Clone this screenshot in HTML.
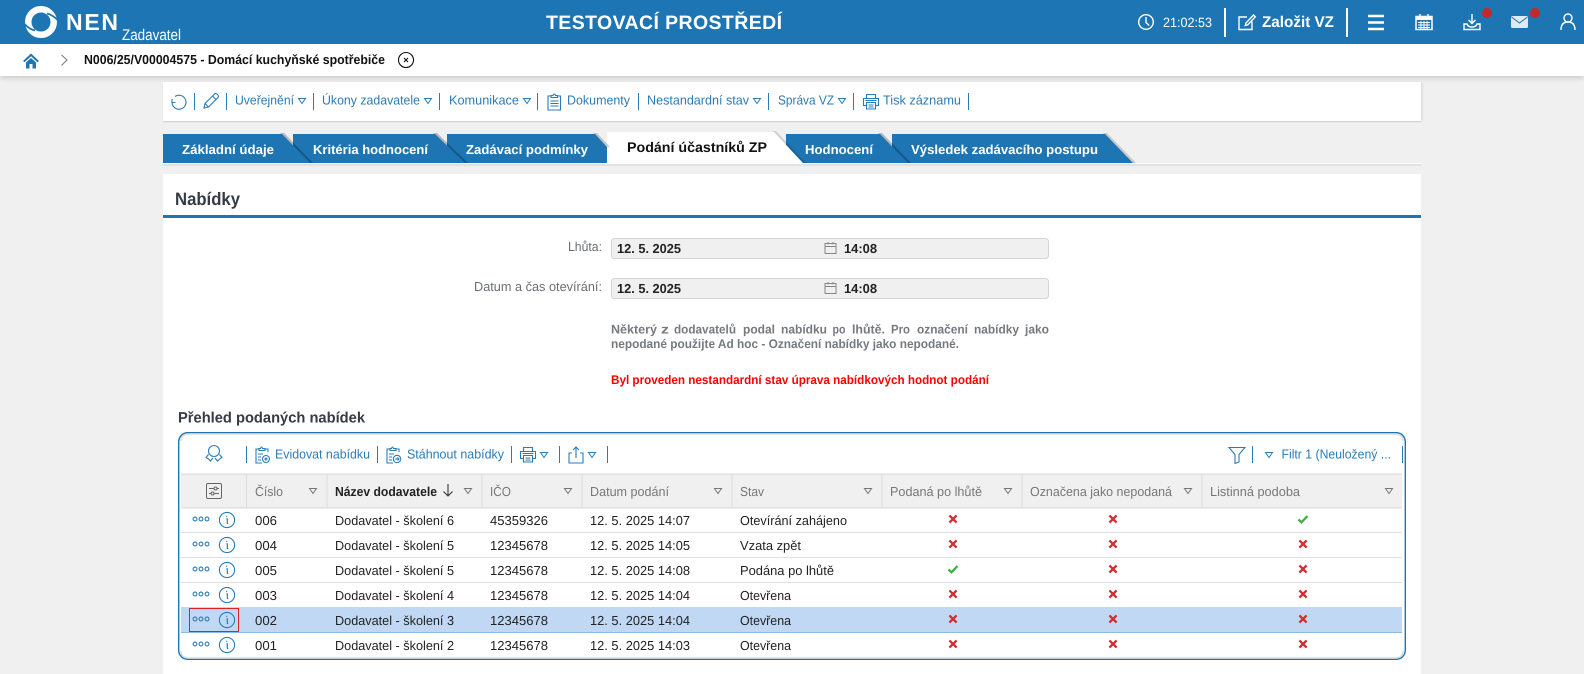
<!DOCTYPE html>
<html lang="cs"><head><meta charset="utf-8"><title>NEN</title>
<style>
html,body{margin:0;padding:0;width:1584px;height:674px;overflow:hidden;background:#f0f0f0}
.b{position:absolute}
svg{position:absolute;left:0;top:0}
text{font-family:"Liberation Sans",sans-serif;text-rendering:geometricPrecision}
.t{font-size:13px;fill:#2a7cb8}
.h{font-size:13px;fill:#777}
.c{font-size:13px;fill:#222}
.tab{font-size:13px;font-weight:bold;fill:#fff}
.p{font-size:12.5px;font-weight:bold;fill:#767a7f}
.i{fill:none;stroke:#2a7cb8;stroke-width:1.1}
.w{fill:none;stroke:#fff;stroke-width:1.4}
</style></head><body>
<div class="b" style="left:0;top:44px;width:1584px;height:32px;background:#fff;box-shadow:0 2px 5px rgba(0,0,0,.16)"></div>
<div class="b" style="left:163px;top:82px;width:1258px;height:39px;background:#fff;box-shadow:0 1px 1px rgba(0,0,0,.14),2px 0 2px rgba(0,0,0,.05)"></div>
<div class="b" style="left:163px;top:174px;width:1258px;height:500px;background:#fff"></div>
<svg width="1584" height="674" viewBox="0 0 1584 674" xmlns="http://www.w3.org/2000/svg">
<defs>
<g id="tri"><path d="M-3.5-2.5H3.5L0 2.5Z" fill="none" stroke-width="1"/></g>
<g id="x"><path d="M-3.6-3.6L3.6 3.6M3.6-3.6L-3.6 3.6" stroke="#d32f2f" stroke-width="2.3" fill="none"/></g>
<g id="ok"><path d="M-4.5 .5L-1.5 3.3L4.5-3" stroke="#3cb043" stroke-width="2.3" fill="none"/></g>
<g id="act" fill="none" stroke="#2a7cb8"><circle cx="-32" cy="-1" r="1.9" stroke-width="1.1"/><circle cx="-26" cy="-1" r="1.9" stroke-width="1.1"/><circle cx="-20" cy="-1" r="1.9" stroke-width="1.1"/><circle cx="0" cy="0" r="7.6" stroke-width="1.1"/><path d="M-.8-3.6h1M-.6-1.2h.9v4.2q0 .7 1 .5" stroke-width="1.2"/></g>
<g id="printer" class="i"><path d="M-4.5-3.5V-7.5H4.5V-3.5M-4.5 3.5H-7.5V-3.5H7.5V3.5H4.5M-4.5 .5H4.5V7H-4.5ZM-2.5 3H2.5M-2.5 5H2.5M-5.5-1.500H5.500"/></g>
</defs>

<!-- header -->
<rect width="1584" height="44" fill="#1d75b3"/>
<circle cx="41" cy="22" r="12.75" fill="none" stroke="#fff" stroke-width="6.500"/>
<path d="M35 30.500Q29 29 24.500 24M47 13.500Q53 15 57.500 20" fill="none" stroke="#1d75b3" stroke-width="1.700"/>
<text x="66" y="30" font-size="23" font-weight="bold" fill="#fff" textLength="52" lengthAdjust="spacing">NEN</text>
<text x="122" y="40" font-size="15.500" fill="#fff" textLength="59" lengthAdjust="spacingAndGlyphs">Zadavatel</text>
<text x="546" y="29" font-size="19.500" font-weight="bold" fill="#fff" textLength="236" lengthAdjust="spacing">TESTOVACÍ PROSTŘEDÍ</text>
<circle cx="1146" cy="22" r="7.300" class="w"/><path d="M1146 17v5.500l3.200 3" class="w"/>
<text x="1163" y="27" font-size="13.500" fill="#fff" textLength="49" lengthAdjust="spacingAndGlyphs">21:02:53</text>
<rect x="1224" y="8" width="2" height="29" fill="#fff"/><rect x="1346" y="8" width="2" height="29" fill="#fff"/>
<path d="M1247 17h-8v12.500h13v-8M1246 23l7.500-8 1.800 1.800-7.500 8-2.500.7Z" class="w"/>
<text x="1262" y="27" font-size="15.500" font-weight="bold" fill="#fff" textLength="72" lengthAdjust="spacingAndGlyphs">Založit VZ</text>
<path d="M1368 16h16M1368 22.500h16M1368 29h16" fill="none" stroke="#fff" stroke-width="2.400"/>
<path d="M1416 16.500h16v13h-16ZM1420 14v4M1428 14v4" fill="none" stroke="#fff" stroke-width="1.500"/><path d="M1416 16h16v4h-16Z" fill="#fff"/><path d="M1418 22.500h12M1418 25h12M1418 27.500h12M1421 21v8M1424 21v8M1427 21v8" stroke="#fff" stroke-width="1"/>
<path d="M1472 14v9M1468.500 20l3.500 3.500 3.500-3.500M1467 24h-3v5.500h16V24h-3q-1 3-5 3t-5-3Z" class="w"/>
<circle cx="1487" cy="13" r="5" fill="#c62828"/>
<rect x="1511" y="16" width="17" height="12" rx="1.500" fill="#dfeaf3"/><path d="M1511.500 17l8 6 8-6" fill="none" stroke="#1d75b3" stroke-width="1"/>
<circle cx="1535" cy="13" r="5" fill="#c62828"/>
<circle cx="1568" cy="18" r="4" class="w"/><path d="M1561 30q0-8 7-8t7 8" class="w"/>

<!-- breadcrumb -->
<path d="M23 61l8-7.500 8 7.500-1.500 1.300-6.500-6-6.500 6Z" fill="#1d75b3"/><path d="M26 62.500l5-4.500 5 4.500V68.500h-3.500V64h-3v4.500H26Z" fill="#1d75b3"/>
<path d="M61.500 55l5.500 5-5.500 5.500" fill="none" stroke="#777" stroke-width="1"/>
<text x="84" y="64" font-size="13" font-weight="bold" fill="#111" textLength="301" lengthAdjust="spacingAndGlyphs">N006/25/V00004575 - Domácí kuchyňské spotřebiče</text>
<circle cx="406" cy="60" r="7.500" fill="none" stroke="#111" stroke-width="1.100"/><path d="M404 58l4 4M408 58l-4 4" stroke="#111" stroke-width="1.100"/>

<!-- toolbar -->
<g fill="#2a7cb8">
<rect x="194" y="93" width="1" height="17"/><rect x="226" y="93" width="1" height="17"/><rect x="313" y="93" width="1" height="17"/><rect x="439" y="93" width="1" height="17"/><rect x="537" y="93" width="1" height="17"/><rect x="638" y="93" width="1" height="17"/><rect x="768" y="93" width="1" height="17"/><rect x="853" y="93" width="1" height="17"/><rect x="968" y="93" width="1" height="17"/>
</g>
<path d="M175 96.500A7 7 0 1 1 172 102.500M172 99v3.500h3.500" class="i"/>
<path d="M204 108l1-4.500 9.500-9.500q1.500-1 3 .5t.5 3l-9.500 9.500ZM205 103.500l3.500 3.500M212.500 96l3.500 3.500" class="i"/>
<text x="235" y="104.500" class="t" textLength="59" lengthAdjust="spacingAndGlyphs">Uveřejnění</text>
<use href="#tri" x="302" y="101" stroke="#2a7cb8"/>
<text x="322" y="104.500" class="t" textLength="98" lengthAdjust="spacingAndGlyphs">Úkony zadavatele</text>
<use href="#tri" x="428" y="101" stroke="#2a7cb8"/>
<text x="449" y="104.500" class="t" textLength="70" lengthAdjust="spacingAndGlyphs">Komunikace</text>
<use href="#tri" x="527" y="101" stroke="#2a7cb8"/>
<path d="M551 96h-3v14h12.500v-14h-3M551 97.500v-2h2q.5-1.500 1.300-1.500t1.200 1.500h2v2ZM550.500 101h8M550.500 103.500h8M550.500 106h8" class="i"/>
<text x="567" y="104.500" class="t" textLength="63" lengthAdjust="spacingAndGlyphs">Dokumenty</text>
<text x="647" y="104.500" class="t" textLength="102" lengthAdjust="spacingAndGlyphs">Nestandardní stav</text>
<use href="#tri" x="757" y="101" stroke="#2a7cb8"/>
<text x="778" y="104.500" class="t" textLength="56" lengthAdjust="spacingAndGlyphs">Správa VZ</text>
<use href="#tri" x="842" y="101" stroke="#2a7cb8"/>
<use href="#printer" x="871" y="102"/>
<text x="883" y="104.500" class="t" textLength="78" lengthAdjust="spacingAndGlyphs">Tisk záznamu</text>

<!-- tabs -->
<rect x="163" y="163" width="1258" height="1" fill="#fff"/>
<rect x="163" y="164" width="1258" height="2" fill="#e2e2e2"/>
<polygon points="1103,133 1107,133 1136,163 1133,163" fill="#000" opacity=".16"/>
<polygon points="892,134 1105,134 1133,163 892,163" fill="#1d75b3"/>
<polygon points="878,133 882,133 911,163 908,163" fill="#000" opacity=".24"/>
<polygon points="786,134 880,134 908,163 786,163" fill="#1d75b3"/>
<polygon points="772,131 776,131 806,163 803,163" fill="#000" opacity=".13"/>
<polygon points="607,132 774,132 803,163 607,163" fill="#fff"/>
<polygon points="593,133 597,133 610,147 607,147" fill="#000" opacity=".18"/>
<polygon points="447,134 595,134 607,147 607,163 447,163" fill="#1d75b3"/>
<polygon points="433,133 437,133 468,163 465,163" fill="#000" opacity=".24"/>
<polygon points="293,134 435,134 465,163 293,163" fill="#1d75b3"/>
<polygon points="280,133 284,133 313,163 310,163" fill="#000" opacity=".24"/>
<polygon points="163,134 282,134 310,163 163,163" fill="#1d75b3"/>
<text x="182" y="154" class="tab" textLength="92" lengthAdjust="spacingAndGlyphs">Základní údaje</text>
<text x="313" y="154" class="tab" textLength="115" lengthAdjust="spacingAndGlyphs">Kritéria hodnocení</text>
<text x="466" y="154" class="tab" textLength="122" lengthAdjust="spacingAndGlyphs">Zadávací podmínky</text>
<text x="627" y="152" font-size="14" font-weight="bold" fill="#111" textLength="140" lengthAdjust="spacingAndGlyphs">Podání účastníků ZP</text>
<text x="805" y="154" class="tab" textLength="68" lengthAdjust="spacingAndGlyphs">Hodnocení</text>
<text x="911" y="154" class="tab" textLength="187" lengthAdjust="spacingAndGlyphs">Výsledek zadávacího postupu</text>

<!-- panel -->
<text x="175" y="205" font-size="18" font-weight="bold" fill="#333b45" textLength="65" lengthAdjust="spacingAndGlyphs">Nabídky</text>
<rect x="163" y="215" width="1258" height="3" fill="#1d75b3"/>

<text x="568" y="251" font-size="13" fill="#6b6f75" textLength="34" lengthAdjust="spacingAndGlyphs">Lhůta:</text>
<rect x="611.500" y="238.500" width="437" height="20" rx="3" fill="#f0f0f0" stroke="#d4d4d4"/>
<text x="617" y="253" font-size="13" font-weight="bold" fill="#222" textLength="64" lengthAdjust="spacingAndGlyphs">12. 5. 2025</text>
<path d="M825 243.500h11v10h-11ZM825 246.500h11M828 242v2.500M833 242v2.500" fill="none" stroke="#888"/>
<text x="844" y="253" font-size="13" font-weight="bold" fill="#222" textLength="33" lengthAdjust="spacingAndGlyphs">14:08</text>

<text x="474" y="291" font-size="13" fill="#6b6f75" textLength="128" lengthAdjust="spacingAndGlyphs">Datum a čas otevírání:</text>
<rect x="611.500" y="278.500" width="437" height="20" rx="3" fill="#f0f0f0" stroke="#d4d4d4"/>
<text x="617" y="293" font-size="13" font-weight="bold" fill="#222" textLength="64" lengthAdjust="spacingAndGlyphs">12. 5. 2025</text>
<path d="M825 283.500h11v10h-11ZM825 286.500h11M828 282v2.500M833 282v2.500" fill="none" stroke="#888"/>
<text x="844" y="293" font-size="13" font-weight="bold" fill="#222" textLength="33" lengthAdjust="spacingAndGlyphs">14:08</text>

<text x="611" y="333.500" class="p" textLength="46" lengthAdjust="spacingAndGlyphs">Některý</text>
<text x="661" y="333.500" class="p" textLength="8" lengthAdjust="spacingAndGlyphs">z</text>
<text x="674" y="333.500" class="p" textLength="62" lengthAdjust="spacingAndGlyphs">dodavatelů</text>
<text x="743" y="333.500" class="p" textLength="32" lengthAdjust="spacingAndGlyphs">podal</text>
<text x="781" y="333.500" class="p" textLength="46" lengthAdjust="spacingAndGlyphs">nabídku</text>
<text x="832.500" y="333.500" class="p" textLength="13" lengthAdjust="spacingAndGlyphs">po</text>
<text x="852" y="333.500" class="p" textLength="33" lengthAdjust="spacingAndGlyphs">lhůtě.</text>
<text x="891" y="333.500" class="p" textLength="19" lengthAdjust="spacingAndGlyphs">Pro</text>
<text x="917" y="333.500" class="p" textLength="51" lengthAdjust="spacingAndGlyphs">označení</text>
<text x="974" y="333.500" class="p" textLength="45" lengthAdjust="spacingAndGlyphs">nabídky</text>
<text x="1025" y="333.500" class="p" textLength="24" lengthAdjust="spacingAndGlyphs">jako</text>
<text x="611" y="348" class="p" textLength="348" lengthAdjust="spacingAndGlyphs">nepodané použijte Ad hoc - Označení nabídky jako nepodané.</text>
<text x="611" y="384" font-size="12.500" font-weight="bold" fill="#f00" textLength="378" lengthAdjust="spacingAndGlyphs">Byl proveden nestandardní stav úprava nabídkových hodnot podání</text>

<text x="178" y="422.500" font-size="15" font-weight="bold" fill="#333b45" textLength="187" lengthAdjust="spacingAndGlyphs">Přehled podaných nabídek</text>

<!-- table -->
<rect x="178.700" y="432.700" width="1226.600" height="226.600" rx="9" fill="#fff" stroke="#1d75b3" stroke-width="1.400"/>
<path d="M181 441q0-7 8-7H1395q8 0 8 7" fill="none" stroke="#ddd" stroke-width="1.500"/>
<path d="M181 651q0 7 8 7H1395q8 0 8-7" fill="none" stroke="#ddd" stroke-width="1.500"/>
<circle cx="214" cy="451" r="5.500" class="i"/><path d="M208.500 454.500l-2.500 3 2.500 1.500 2 2 2.500-3M219.500 454.500l2.500 3-2.500 1.500-2 2-2.500-3" class="i"/>
<g fill="#2a7cb8"><rect x="246" y="446" width="1" height="17"/><rect x="377" y="446" width="1" height="17"/><rect x="511" y="446" width="1" height="17"/><rect x="559" y="446" width="1" height="17"/><rect x="607" y="446" width="1" height="17"/><rect x="1252" y="446" width="1" height="17"/><rect x="1402" y="446" width="1" height="17"/></g>
<path d="M259 449h-3v14h6M265 449h3v3M259 450.500v-2h1.500q.5-1.500 1-1.500t1 1.500H265v2ZM258 454h5M258 457h3M258 460h3" class="i"/><circle cx="266" cy="459" r="3.500" class="i"/><circle cx="266" cy="459" r="1" class="i"/>
<text x="275" y="458.500" class="t" textLength="95" lengthAdjust="spacingAndGlyphs">Evidovat nabídku</text>
<path d="M390 449h-3v14h6M396 449h3v3M390 450.500v-2h1.500q.5-1.500 1-1.500t1 1.500H396v2ZM389 454h5M389 457h3M389 460h3" class="i"/><circle cx="397" cy="459" r="3.700" class="i"/><path d="M395 459h4M397.500 457.500l1.500 1.500-1.500 1.500" class="i"/>
<text x="407" y="458.500" class="t" textLength="97" lengthAdjust="spacingAndGlyphs">Stáhnout nabídky</text>
<use href="#printer" x="528" y="455"/>
<use href="#tri" x="544" y="455" stroke="#2a7cb8"/>
<path d="M572 453h-3v10h14v-10h-3M576 458V447M573 450l3-3 3 3" class="i"/>
<use href="#tri" x="592" y="455" stroke="#2a7cb8"/>
<path d="M1229 447.500h16l-6 7v7.500l-4 1.500v-9Z" class="i"/>
<use href="#tri" x="1269" y="455" stroke="#2a7cb8"/>
<text x="1281.500" y="458.500" class="t" textLength="109.500" lengthAdjust="spacingAndGlyphs">Filtr 1 (Neuložený ...</text>

<!-- header row -->
<rect x="181" y="474" width="1221" height="34" fill="#f0f0f0"/>
<rect x="181" y="473.500" width="1221" height="1.200" fill="#ddd"/><rect x="181" y="507.300" width="1221" height="1.200" fill="#ddd"/>
<g fill="#ddd"><rect x="246" y="474" width="1" height="34"/><rect x="326.500" y="474" width="1" height="34"/><rect x="481.500" y="474" width="1" height="34"/><rect x="581.500" y="474" width="1" height="34"/><rect x="731.500" y="474" width="1" height="34"/><rect x="881.500" y="474" width="1" height="34"/><rect x="1021.500" y="474" width="1" height="34"/><rect x="1201.500" y="474" width="1" height="34"/></g>
<rect x="206.500" y="483.500" width="15" height="15" rx="1.500" fill="none" stroke="#666"/><path d="M209 488.500h5M217 488.500h2M209 493.500h2M214 493.500h5" stroke="#666" fill="none"/><circle cx="215.500" cy="488.500" r="1.500" fill="none" stroke="#666"/><circle cx="212.500" cy="493.500" r="1.500" fill="none" stroke="#666"/>
<text x="255" y="496" class="h" textLength="28" lengthAdjust="spacingAndGlyphs">Číslo</text>
<text x="335" y="496" font-size="13" font-weight="bold" fill="#222" textLength="102" lengthAdjust="spacingAndGlyphs">Název dodavatele</text>
<path d="M448 484v12M443.500 491.500l4.500 4.500 4.500-4.500" fill="none" stroke="#333" stroke-width="1.100"/>
<text x="490" y="496" class="h" textLength="21" lengthAdjust="spacingAndGlyphs">IČO</text>
<text x="590" y="496" class="h" textLength="79" lengthAdjust="spacingAndGlyphs">Datum podání</text>
<text x="740" y="496" class="h" textLength="24" lengthAdjust="spacingAndGlyphs">Stav</text>
<text x="890" y="496" class="h" textLength="92" lengthAdjust="spacingAndGlyphs">Podaná po lhůtě</text>
<text x="1030" y="496" class="h" textLength="142" lengthAdjust="spacingAndGlyphs">Označena jako nepodaná</text>
<text x="1210" y="496" class="h" textLength="90" lengthAdjust="spacingAndGlyphs">Listinná podoba</text>
<g stroke="#777"><use href="#tri" x="313" y="491"/><use href="#tri" x="468" y="491"/><use href="#tri" x="568" y="491"/><use href="#tri" x="718" y="491"/><use href="#tri" x="868" y="491"/><use href="#tri" x="1008" y="491"/><use href="#tri" x="1188" y="491"/><use href="#tri" x="1389" y="491"/></g>

<!-- rows -->
<rect x="181" y="607" width="1221" height="25" fill="#c0d8f3"/>
<g fill="#e0e0e0"><rect x="181" y="532" width="1221" height="1"/><rect x="181" y="557" width="1221" height="1"/><rect x="181" y="582" width="1221" height="1"/><rect x="181" y="632" width="1221" height="1" style="fill:#8dbbe8"/></g>
<use href="#act" x="227" y="520"/><use href="#act" x="227" y="545"/><use href="#act" x="227" y="570"/><use href="#act" x="227" y="595"/><use href="#act" x="227" y="620"/><use href="#act" x="227" y="645"/>
<rect x="189.500" y="608.500" width="49" height="23" fill="none" stroke="#e02020"/>

<text x="255" y="525" class="c" textLength="22" lengthAdjust="spacingAndGlyphs">006</text><text x="335" y="525" class="c" textLength="119" lengthAdjust="spacingAndGlyphs">Dodavatel - školení 6</text><text x="490" y="525" class="c" textLength="58" lengthAdjust="spacingAndGlyphs">45359326</text><text x="590" y="525" class="c" textLength="100" lengthAdjust="spacingAndGlyphs">12. 5. 2025 14:07</text><text x="740" y="525" class="c" textLength="107" lengthAdjust="spacingAndGlyphs">Otevírání zahájeno</text>
<text x="255" y="550" class="c" textLength="22" lengthAdjust="spacingAndGlyphs">004</text><text x="335" y="550" class="c" textLength="119" lengthAdjust="spacingAndGlyphs">Dodavatel - školení 5</text><text x="490" y="550" class="c" textLength="58" lengthAdjust="spacingAndGlyphs">12345678</text><text x="590" y="550" class="c" textLength="100" lengthAdjust="spacingAndGlyphs">12. 5. 2025 14:05</text><text x="740" y="550" class="c" textLength="61" lengthAdjust="spacingAndGlyphs">Vzata zpět</text>
<text x="255" y="575" class="c" textLength="22" lengthAdjust="spacingAndGlyphs">005</text><text x="335" y="575" class="c" textLength="119" lengthAdjust="spacingAndGlyphs">Dodavatel - školení 5</text><text x="490" y="575" class="c" textLength="58" lengthAdjust="spacingAndGlyphs">12345678</text><text x="590" y="575" class="c" textLength="100" lengthAdjust="spacingAndGlyphs">12. 5. 2025 14:08</text><text x="740" y="575" class="c" textLength="94" lengthAdjust="spacingAndGlyphs">Podána po lhůtě</text>
<text x="255" y="600" class="c" textLength="22" lengthAdjust="spacingAndGlyphs">003</text><text x="335" y="600" class="c" textLength="119" lengthAdjust="spacingAndGlyphs">Dodavatel - školení 4</text><text x="490" y="600" class="c" textLength="58" lengthAdjust="spacingAndGlyphs">12345678</text><text x="590" y="600" class="c" textLength="100" lengthAdjust="spacingAndGlyphs">12. 5. 2025 14:04</text><text x="740" y="600" class="c" textLength="51" lengthAdjust="spacingAndGlyphs">Otevřena</text>
<text x="255" y="625" class="c" textLength="22" lengthAdjust="spacingAndGlyphs">002</text><text x="335" y="625" class="c" textLength="119" lengthAdjust="spacingAndGlyphs">Dodavatel - školení 3</text><text x="490" y="625" class="c" textLength="58" lengthAdjust="spacingAndGlyphs">12345678</text><text x="590" y="625" class="c" textLength="100" lengthAdjust="spacingAndGlyphs">12. 5. 2025 14:04</text><text x="740" y="625" class="c" textLength="51" lengthAdjust="spacingAndGlyphs">Otevřena</text>
<text x="255" y="650" class="c" textLength="22" lengthAdjust="spacingAndGlyphs">001</text><text x="335" y="650" class="c" textLength="119" lengthAdjust="spacingAndGlyphs">Dodavatel - školení 2</text><text x="490" y="650" class="c" textLength="58" lengthAdjust="spacingAndGlyphs">12345678</text><text x="590" y="650" class="c" textLength="100" lengthAdjust="spacingAndGlyphs">12. 5. 2025 14:03</text><text x="740" y="650" class="c" textLength="51" lengthAdjust="spacingAndGlyphs">Otevřena</text>

<use href="#x" x="953" y="519"/><use href="#x" x="1113" y="519"/><use href="#ok" x="1303" y="519"/>
<use href="#x" x="953" y="544"/><use href="#x" x="1113" y="544"/><use href="#x" x="1303" y="544"/>
<use href="#ok" x="953" y="569"/><use href="#x" x="1113" y="569"/><use href="#x" x="1303" y="569"/>
<use href="#x" x="953" y="594"/><use href="#x" x="1113" y="594"/><use href="#x" x="1303" y="594"/>
<use href="#x" x="953" y="619"/><use href="#x" x="1113" y="619"/><use href="#x" x="1303" y="619"/>
<use href="#x" x="953" y="644"/><use href="#x" x="1113" y="644"/><use href="#x" x="1303" y="644"/>
</svg>
</body></html>
